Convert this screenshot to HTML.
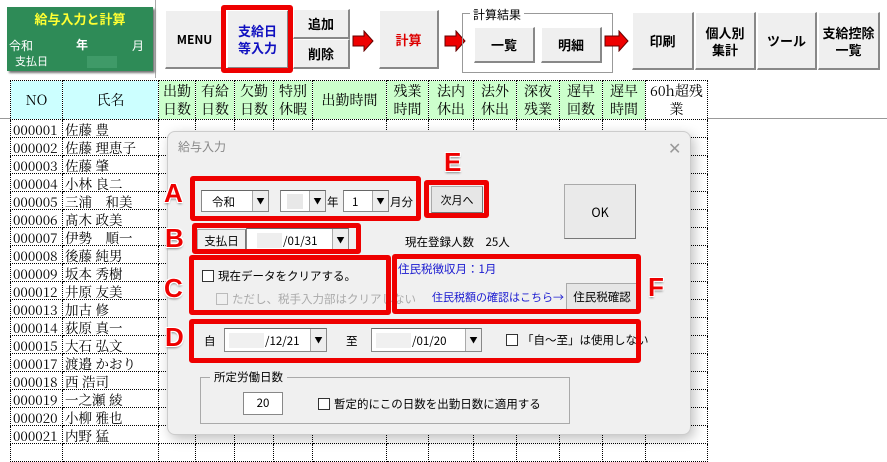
<!DOCTYPE html>
<html><head><meta charset="utf-8"><style>
*{box-sizing:border-box;margin:0;padding:0}
body{width:887px;height:447px;overflow:hidden;background:#fff;font-family:"Liberation Sans","Noto Sans CJK JP",sans-serif;position:relative;font-size:13px;color:#000}
.a{position:absolute}
.btn{position:absolute;background:#efefef;border:1px solid #fff;border-right:2px solid #888;border-bottom:2px solid #888;display:flex;align-items:center;justify-content:center;text-align:center;font-weight:bold;font-size:13px;line-height:17px;font-family:"Noto Sans CJK JP",sans-serif}
table{border-collapse:collapse;position:absolute;left:10px;top:80px;font-family:"Noto Serif CJK SC","Noto Sans CJK JP",serif;table-layout:fixed}
td{border:1px dotted #000;font-size:14px;line-height:17px;padding:0;overflow:hidden;white-space:nowrap}
tr.h td{height:39px;text-align:center;background:#ccffcc;line-height:18px}
tr.r td{height:18px;font-size:13.5px;line-height:16px;padding-left:2px}
.red{border:5px solid #e00;border-radius:3px;position:absolute}
.lab{position:absolute;color:#e00;font-weight:900;font-size:26px;font-family:"Liberation Sans",sans-serif;text-shadow:-1px -1px 0 #fff,1px 1px 0 #fff,1px -1px 0 #fff,-1px 1px 0 #fff,0 2px 2px #888}
.dlg{position:absolute;left:167px;top:131px;width:524px;height:304px;background:#f0f0f0;border:1px solid #ccc;border-radius:8px;box-shadow:3px 4px 12px rgba(0,0,0,.25);font-family:"Noto Sans CJK JP",sans-serif;font-size:11.5px}
.cb{display:inline-block;width:12px;height:12px;border:1px solid #333;background:#fff;vertical-align:-2px;margin-right:4px}
.combo{position:absolute;background:#fff;border:1px solid #888;border-top-color:#666}
.dd{position:absolute;right:0;top:0;bottom:0;width:16px;background:#eee;border-left:1px solid #aaa;font-size:8px;display:flex;align-items:center;justify-content:center}
.wb{position:absolute;background:#e6e6e6;border:1px solid #aaa;border-right-color:#777;border-bottom-color:#777;display:flex;align-items:center;justify-content:center}
</style></head><body>
<div class="a" style="left:155px;top:0;width:1px;height:78px;background:#aaa"></div>
<div class="a" style="left:7px;top:7px;width:146px;height:64px;background:#2e8b57;box-shadow:2px 2px 2px #777;color:#fff;font-family:'Noto Sans CJK JP',sans-serif">
<div class="a" style="left:0;width:146px;top:2px;text-align:center;color:#ffff33;font-weight:bold;font-size:13px">給与入力と計算</div>
<div class="a" style="left:2px;top:30px;font-size:12px">令和</div>
<div class="a" style="left:69px;top:29px;font-size:12px;font-weight:bold">年</div>
<div class="a" style="left:125px;top:30px;font-size:12px">月</div>
<div class="a" style="left:8px;top:46px;font-size:11px">支払日</div>
<div class="a" style="left:80px;top:49px;width:30px;height:12px;background:#3f9a68"></div>
</div>
<div class="btn" style="left:165px;top:10px;width:60px;height:59px;font-size:12px">MENU</div>
<div class="btn" style="left:227px;top:10px;width:62px;height:59px;color:#1010c0">支給日<br>等入力</div>
<div class="red" style="left:221px;top:5px;width:72px;height:68px"></div>
<div class="btn" style="left:293px;top:9px;width:57px;height:30px">追加</div>
<div class="btn" style="left:293px;top:39px;width:57px;height:30px">削除</div>
<svg class="a" style="left:352px;top:30px" width="22" height="22"><path d="M1 6h11V1l9 10-9 10v-5H1z" fill="#e00" stroke="#600"/></svg>
<div class="btn" style="left:379px;top:10px;width:60px;height:59px;color:#d00">計算</div>
<svg class="a" style="left:444px;top:30px" width="22" height="22"><path d="M1 6h11V1l9 10-9 10v-5H1z" fill="#e00" stroke="#600"/></svg>
<div class="a" style="left:462px;top:13px;width:151px;height:60px;border:1px solid #999"></div>
<div class="a" style="left:470px;top:6px;background:#fff;padding:0 3px;font-size:12px;font-family:'Noto Sans CJK JP',sans-serif">計算結果</div>
<div class="btn" style="left:474px;top:27px;width:61px;height:36px">一覧</div>
<div class="btn" style="left:541px;top:27px;width:61px;height:36px">明細</div>
<svg class="a" style="left:604px;top:30px" width="26" height="22"><path d="M1 6h14V1l9 10-9 10v-5H1z" fill="#e00" stroke="#600"/></svg>
<div class="btn" style="left:632px;top:12px;width:62px;height:58px">印刷</div>
<div class="btn" style="left:695px;top:12px;width:61px;height:58px">個人別<br>集計</div>
<div class="btn" style="left:757px;top:12px;width:60px;height:58px">ツール</div>
<div class="btn" style="left:818px;top:12px;width:62px;height:58px">支給控除<br>一覧</div>
<div class="a" style="left:0;top:118px;width:887px;height:1px;background:#999"></div>
<table>
<colgroup><col style="width:52px"><col style="width:96px"><col style="width:37px"><col style="width:39px"><col style="width:39px"><col style="width:39px"><col style="width:74px"><col style="width:42px"><col style="width:45px"><col style="width:43px"><col style="width:43px"><col style="width:43px"><col style="width:43px"><col style="width:62px"></colgroup>
<tr class="h"><td style="background:#ccffff">NO</td><td style="background:#ccffff">氏名</td><td>出勤<br>日数</td><td>有給<br>日数</td><td>欠勤<br>日数</td><td>特別<br>休暇</td><td>出勤時間</td><td>残業<br>時間</td><td>法内<br>休出</td><td>法外<br>休出</td><td>深夜<br>残業</td><td>遅早<br>回数</td><td>遅早<br>時間</td><td style="background:#fff">60h超残<br>業</td></tr>
<tr class="r"><td>000001</td><td>佐藤 豊</td><td></td><td></td><td></td><td></td><td></td><td></td><td></td><td></td><td></td><td></td><td></td><td></td></tr>
<tr class="r"><td>000002</td><td>佐藤 理恵子</td><td></td><td></td><td></td><td></td><td></td><td></td><td></td><td></td><td></td><td></td><td></td><td></td></tr>
<tr class="r"><td>000003</td><td>佐藤 肇</td><td></td><td></td><td></td><td></td><td></td><td></td><td></td><td></td><td></td><td></td><td></td><td></td></tr>
<tr class="r"><td>000004</td><td>小林 良二</td><td></td><td></td><td></td><td></td><td></td><td></td><td></td><td></td><td></td><td></td><td></td><td></td></tr>
<tr class="r"><td>000005</td><td>三浦　和美</td><td></td><td></td><td></td><td></td><td></td><td></td><td></td><td></td><td></td><td></td><td></td><td></td></tr>
<tr class="r"><td>000006</td><td>髙木 政美</td><td></td><td></td><td></td><td></td><td></td><td></td><td></td><td></td><td></td><td></td><td></td><td></td></tr>
<tr class="r"><td>000007</td><td>伊勢　順一</td><td></td><td></td><td></td><td></td><td></td><td></td><td></td><td></td><td></td><td></td><td></td><td></td></tr>
<tr class="r"><td>000008</td><td>後藤 純男</td><td></td><td></td><td></td><td></td><td></td><td></td><td></td><td></td><td></td><td></td><td></td><td></td></tr>
<tr class="r"><td>000009</td><td>坂本 秀樹</td><td></td><td></td><td></td><td></td><td></td><td></td><td></td><td></td><td></td><td></td><td></td><td></td></tr>
<tr class="r"><td>000012</td><td>井原 友美</td><td></td><td></td><td></td><td></td><td></td><td></td><td></td><td></td><td></td><td></td><td></td><td></td></tr>
<tr class="r"><td>000013</td><td>加古 修</td><td></td><td></td><td></td><td></td><td></td><td></td><td></td><td></td><td></td><td></td><td></td><td></td></tr>
<tr class="r"><td>000014</td><td>荻原 真一</td><td></td><td></td><td></td><td></td><td></td><td></td><td></td><td></td><td></td><td></td><td></td><td></td></tr>
<tr class="r"><td>000015</td><td>大石 弘文</td><td></td><td></td><td></td><td></td><td></td><td></td><td></td><td></td><td></td><td></td><td></td><td></td></tr>
<tr class="r"><td>000017</td><td>渡邉 かおり</td><td></td><td></td><td></td><td></td><td></td><td></td><td></td><td></td><td></td><td></td><td></td><td></td></tr>
<tr class="r"><td>000018</td><td>西 浩司</td><td></td><td></td><td></td><td></td><td></td><td></td><td></td><td></td><td></td><td></td><td></td><td></td></tr>
<tr class="r"><td>000019</td><td>一之瀬 綾</td><td></td><td></td><td></td><td></td><td></td><td></td><td></td><td></td><td></td><td></td><td></td><td></td></tr>
<tr class="r"><td>000020</td><td>小柳 雅也</td><td></td><td></td><td></td><td></td><td></td><td></td><td></td><td></td><td></td><td></td><td></td><td></td></tr>
<tr class="r"><td>000021</td><td>内野 猛</td><td></td><td></td><td></td><td></td><td></td><td></td><td></td><td></td><td></td><td></td><td></td><td></td></tr>
<tr class="r"><td></td><td></td><td></td><td></td><td></td><td></td><td></td><td></td><td></td><td></td><td></td><td></td><td></td><td></td></tr>
</table>

<div class="dlg">
<div class="a" style="left:10px;top:6px;color:#888;font-size:12px">給与入力</div>
<div class="a" style="left:500px;top:3px;color:#999;font-size:16px">✕</div>
<div class="combo" style="left:33px;top:58px;width:68px;height:22px"><span class="a" style="left:10px;top:3px">令和</span><div class="dd">▼</div></div>
<div class="combo" style="left:112px;top:58px;width:46px;height:22px"><div class="a" style="left:6px;top:3px;width:16px;height:15px;background:#e8e8e8"></div><div class="dd">▼</div></div>
<div class="a" style="left:159px;top:62px">年</div>
<div class="combo" style="left:175px;top:58px;width:46px;height:22px"><span class="a" style="left:8px;top:3px">1</span><div class="dd">▼</div></div>
<div class="a" style="left:222px;top:62px">月分</div>
<div class="wb" style="left:263px;top:54px;width:52px;height:27px;font-size:11px">次月へ</div>
<div class="wb" style="left:396px;top:52px;width:72px;height:55px;background:#eaeaea;font-size:12.5px">OK</div>
<div class="wb" style="left:29px;top:97px;width:49px;height:24px;background:#f0f0f0">支払日</div>
<div class="combo" style="left:78px;top:96px;width:103px;height:24px"><div class="a" style="left:10px;top:4px;width:25px;height:15px;background:#eee"></div><span class="a" style="left:36px;top:4px">/01/31</span><div class="dd">▼</div></div>
<div class="a" style="left:237px;top:102px">現在登録人数　25人</div>
<div class="a" style="left:34px;top:136px"><span class="cb"></span>現在データをクリアする。</div>
<div class="a" style="left:48px;top:159px;color:#aaa"><span class="cb" style="border-color:#bbb;background:#f0f0f0"></span>ただし、税手入力部はクリアしない</div>
<div class="a" style="left:230px;top:129px;color:#1a1ad0">住民税徴収月：1月</div>
<div class="a" style="left:264px;top:157px;color:#1a1ad0;font-size:11px">住民税額の確認はこちら→</div>
<div class="wb" style="left:398px;top:151px;width:72px;height:28px">住民税確認</div>
<div class="a" style="left:36px;top:201px">自</div>
<div class="combo" style="left:56px;top:196px;width:103px;height:24px"><div class="a" style="left:4px;top:4px;width:35px;height:15px;background:#f0f0f0"></div><span class="a" style="left:40px;top:4px">/12/21</span><div class="dd">▼</div></div>
<div class="a" style="left:178px;top:201px">至</div>
<div class="combo" style="left:203px;top:196px;width:111px;height:24px"><div class="a" style="left:4px;top:4px;width:35px;height:15px;background:#f0f0f0"></div><span class="a" style="left:40px;top:4px">/01/20</span><div class="dd">▼</div></div>
<div class="a" style="left:338px;top:200px"><span class="cb"></span>「自～至」は使用しない</div>
<div class="a" style="left:32px;top:245px;width:370px;height:47px;border:1px solid #aaa"></div>
<div class="a" style="left:42px;top:237px;background:#f0f0f0;padding:0 4px">所定労働日数</div>
<div class="a" style="left:75px;top:260px;width:40px;height:23px;background:#fff;border:1px solid #888;text-align:center;line-height:21px">20</div>
<div class="a" style="left:150px;top:264px"><span class="cb"></span>暫定的にこの日数を出勤日数に適用する</div>
</div>

<div class="red" style="left:190px;top:176px;width:231px;height:45px"></div>
<div class="red" style="left:424px;top:180px;width:65px;height:38px"></div>
<div class="red" style="left:192px;top:223px;width:169px;height:31px"></div>
<div class="red" style="left:189px;top:255px;width:202px;height:60px"></div>
<div class="red" style="left:392px;top:254px;width:249px;height:60px"></div>
<div class="red" style="left:189px;top:319px;width:452px;height:44px"></div>
<div class="lab" style="left:164px;top:178px">A</div>
<div class="lab" style="left:165px;top:223px">B</div>
<div class="lab" style="left:164px;top:273px">C</div>
<div class="lab" style="left:165px;top:322px">D</div>
<div class="lab" style="left:444px;top:147px">E</div>
<div class="lab" style="left:648px;top:272px">F</div>
</body></html>
